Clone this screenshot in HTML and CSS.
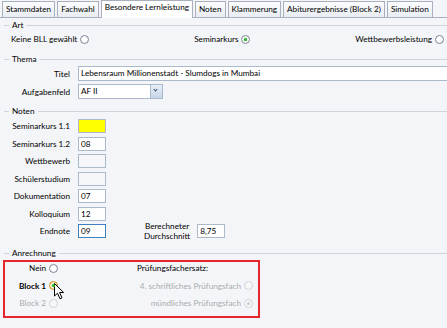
FILE: index.html
```html
<!DOCTYPE html>
<html lang="de">
<head>
  <meta charset="UTF-8" />
  <title>Besondere Lernleistung</title>
  <link rel="stylesheet" href="styles.css">
</head>
<body>
  <div class="tabs">
    <div class="tab">Stammdaten</div>
    <div class="tab">Fachwahl</div>
    <div class="tab active">Besondere Lernleistung</div>
    <div class="tab">Noten</div>
    <div class="tab">Klammerung</div>
    <div class="tab">Abiturergebnisse (Block 2)</div>
    <div class="tab">Simulation</div>
  </div>

  <div class="group-title">Art</div>
  <div class="art-row">
    <label class="opt">Keine BLL gewählt <span class="radio"></span></label>
    <label class="opt">Seminarkurs <span class="radio checked"></span></label>
    <label class="opt">Wettbewerbsleistung <span class="radio"></span></label>
  </div>

  <div class="group-title">Thema</div>
  <div class="form-grid thema">
    <span class="lbl">Titel</span>
    <div class="field wide">Lebensraum Millionenstadt - Slumdogs in Mumbai</div>
    <span class="lbl">Aufgabenfeld</span>
    <div class="field select">AF II<span class="drop"></span></div>
  </div>

  <div class="group-title">Noten</div>
  <div class="form-grid noten">
    <span class="lbl">Seminarkurs 1.1</span>
    <div class="field small yellow"></div>
    <span class="lbl">Seminarkurs 1.2</span>
    <div class="field small">08</div>
    <span class="lbl">Wettbewerb</span>
    <div class="field small empty"></div>
    <span class="lbl">Schülerstudium</span>
    <div class="field small empty"></div>
    <span class="lbl">Dokumentation</span>
    <div class="field small">07</div>
    <span class="lbl">Kolloquium</span>
    <div class="field small">12</div>
    <span class="lbl">Endnote</span>
    <div class="end-row">
      <div class="field small focus">09</div>
      <span class="avg-lbl">Berechneter<br>Durchschnitt</span>
      <div class="field small">8,75</div>
    </div>
  </div>

  <div class="group-title">Anrechnung</div>
  <div class="anrechnung">
    <div class="anr-col left">
      <label class="opt">Nein <span class="radio"></span></label>
      <label class="opt strong">Block 1 <span class="radio checked hover"><svg class="cursor" width="11" height="17" viewBox="0 0 11 17"><path d="M0.5 0.5 L0.5 13 L3.5 10.2 L6 15.8 L8 14.9 L5.6 9.5 L9.6 9.5 Z" fill="#fff" stroke="#000" stroke-width="1" stroke-linejoin="round"/></svg></span></label>
      <label class="opt disabled">Block 2 <span class="radio"></span></label>
    </div>
    <div class="anr-col right">
      <div class="pf-title">Prüfungsfachersatz:</div>
      <label class="opt disabled">4. schriftliches Prüfungsfach <span class="radio"></span></label>
      <label class="opt disabled">mündliches Prüfungsfach <span class="radio checked"></span></label>
    </div>
  </div>
</body>
</html>
```

FILE: styles.css
```css
*, *::before, *::after { box-sizing: border-box; }

body {
  margin: 0;
  width: 447px;
  height: 328px;
  overflow: hidden;
  background: #f4f5f8;
  color: #000;
  font-family: Lato, 'Liberation Sans', sans-serif;
  font-size: 8.2px;
  line-height: 12px;
}

/* tabs */
.tabs {
  display: flex;
  align-items: flex-end;
  gap: 2px;
  height: 18px;
  padding-left: 2px;
  border-bottom: 1px solid #a7b0bc;
}

.tab {
  height: 16px;
  padding: 1px 3px 0;
  border: 1px solid #a7b0bc;
  border-bottom: none;
  background: linear-gradient(#fbfcfd, #e9edf2);
  white-space: nowrap;
}

.tab.active {
  height: 18px;
  margin-bottom: -1px;
  padding-top: 0;
  background: #fff;
}

/* group headers */
.group-title {
  display: flex;
  align-items: center;
  gap: 3px;
  height: 14px;
  margin-left: 4px;
}

.group-title::before {
  content: "";
  width: 5px;
  border-top: 1px solid #cfd4db;
}

.group-title::after {
  content: "";
  flex: 1;
  border-top: 1px solid #cfd4db;
}

/* radios */
.opt {
  display: inline-flex;
  align-items: center;
  gap: 3px;
  height: 12px;
  white-space: nowrap;
}

.opt.strong {
  font-weight: 700;
}

.radio {
  position: relative;
  display: inline-block;
  width: 9px;
  height: 9px;
  border-radius: 50%;
  border: 1px solid #818a98;
  background: radial-gradient(#fff 40%, #e6e9ee);
}

.radio.checked::after {
  content: "";
  position: absolute;
  left: 2px;
  top: 2px;
  width: 3px;
  height: 3px;
  border-radius: 50%;
  background: #2fb536;
  box-shadow: 0 0 1px #1a8f20;
}

.radio.hover {
  border-color: #c98d17;
  background: radial-gradient(#fff 30%, #f7d66a);
}

.disabled {
  color: #a9acb1;
}

.disabled .radio {
  border-color: #d0d3d8;
  background: #f6f7f9;
}

.disabled .radio.checked::after {
  background: #c7cace;
  box-shadow: none;
}

.cursor {
  position: absolute;
  left: 4px;
  top: 1px;
}

/* Art */
.art-row {
  display: flex;
  justify-content: space-between;
  padding: 1px 3px 7px 11px;
}

/* label + field grids */
.form-grid {
  display: grid;
  grid-template-columns: 70px auto;
  column-gap: 8px;
  align-items: center;
  justify-items: start;
}

.form-grid .lbl {
  justify-self: end;
  white-space: nowrap;
}

.thema {
  row-gap: 3px;
  padding-bottom: 5px;
}

.noten {
  row-gap: 3.5px;
  padding: 1px 0 8px;
}

.field {
  height: 15px;
  padding: 0 2px;
  border: 1px solid #abb9cc;
  background: #fff;
  line-height: 13px;
  white-space: nowrap;
}

.field.wide {
  width: 380px;
}

.field.select {
  position: relative;
  width: 85px;
}

.drop {
  position: absolute;
  right: 0;
  top: 0;
  width: 12px;
  height: 13px;
  border-left: 1px solid #abb9cc;
  background: linear-gradient(#e9f0f8, #c6d4e6);
}

.drop::after {
  content: "";
  position: absolute;
  left: 3px;
  top: 3px;
  width: 3px;
  height: 3px;
  border-right: 1.5px solid #3e4f66;
  border-bottom: 1.5px solid #3e4f66;
  transform: rotate(45deg);
}

.field.small {
  width: 28px;
  height: 14px;
  line-height: 12px;
}

.field.yellow {
  background: #ffff00;
}

.field.empty {
  background: #f6f7f9;
}

.field.focus {
  border-color: #3f80bd;
}

.end-row {
  display: flex;
  align-items: center;
}

.avg-lbl {
  margin: -3px 7px -3px 38px;
  text-align: center;
  line-height: 10px;
}

/* Anrechnung */
.anrechnung {
  display: flex;
  width: 257px;
  height: 58px;
  margin-left: 3px;
  padding: 0 0 7px;
  border: 2px solid #e3272b;
}

.anr-col {
  display: flex;
  flex-direction: column;
  gap: 5.5px;
}

.anr-col.left {
  align-items: flex-end;
  width: 53px;
}

.anr-col.right {
  align-items: flex-end;
  width: 195px;
}

.pf-title {
  align-self: flex-start;
  margin-left: 79px;
}
```
